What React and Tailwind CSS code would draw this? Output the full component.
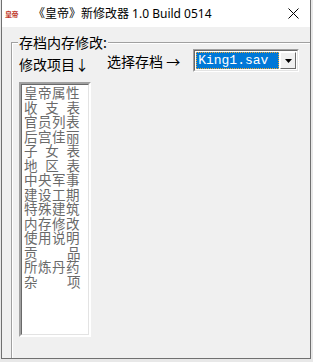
import React from "react";

const items = [
  "皇帝属性",
  "收\u2002支\u2002表",
  "官员列表",
  "后宫佳丽",
  "子\u2002女\u2002表",
  "地\u2002区\u2002表",
  "中央军事",
  "建设工期",
  "特殊建筑",
  "内存修改",
  "使用说明",
  "贡\u2002\u2002\u2002\u2002品",
  "所炼丹药",
  "杂\u2002\u2002\u2002\u2002项",
];

const cjk = { fontFamily: '"Noto Sans CJK SC", sans-serif' };

export default function App() {
  return (
    <div className="w-[313px] h-[362px] bg-[#e8e8e8] pl-[1px] overflow-hidden">
      {/* WINDOW */}
      <div className="w-[310px] h-[359px] flex flex-col border-l border-r border-b border-[#707070] bg-[#f0f0f0]">
        {/* TITLE BAR */}
        <div className="h-[27px] bg-white flex items-center shrink-0">
          <span
            className="ml-[3px] w-[16px] text-[7px] leading-[8px] font-bold text-[#c0392b] tracking-[-0.5px]"
            style={cjk}
          >
            皇帝
          </span>
          <span
            className="ml-[12px] text-[12px] text-black"
            style={{ fontFamily: '"Noto Sans", "Noto Sans CJK SC", sans-serif' }}
          >
            《皇帝》新修改器 1.0 Build 0514
          </span>
          <div className="ml-auto mr-[11px] flex items-center">
            <svg width="11" height="11" viewBox="0 0 11 11">
              <path d="M0.5 0.5 L10.5 10.5 M10.5 0.5 L0.5 10.5" stroke="#000" strokeWidth="1" />
            </svg>
          </div>
        </div>

        {/* CLIENT AREA */}
        <div className="flex-1 pl-[9px] pt-[15px]">
          {/* GROUP BOX */}
          <div className="relative h-full border-t border-l border-[#a0a0a0] shadow-[inset_1px_1px_0_#ffffff]">
            <span
              className="absolute -top-[11px] left-[6px] px-[1px] bg-[#f0f0f0] text-[14px] leading-[20px] text-black"
              style={cjk}
            >
              存档内存修改:
            </span>

            <div className="flex pt-[1px]">
              {/* LEFT: items list */}
              <div className="pl-[7px] flex flex-col">
                <div className="pt-[10px] text-[14px] leading-[20px] text-black" style={cjk}>
                  修改项目↓
                </div>
                <div className="mt-[8px] w-[72px] h-[255px] border-2 border-t-[#a0a0a0] border-l-[#a0a0a0] border-b-white border-r-white">
                  <div className="w-full h-full border border-t-[#696969] border-l-[#696969] border-b-[#e3e3e3] border-r-[#e3e3e3] bg-white pl-[2px]">
                    {items.map((t) => (
                      <div
                        key={t}
                        className="text-[13.5px] leading-[14.5px] tracking-[0.5px] text-[#6a6a6a] whitespace-pre"
                        style={cjk}
                      >
                        {t}
                      </div>
                    ))}
                  </div>
                </div>
              </div>

              {/* RIGHT: save select */}
              <div className="ml-[16px] pt-[5px] flex items-center h-fit">
                <span className="text-[14px] leading-[20px] text-black" style={cjk}>
                  选择存档 →
                </span>
                <div className="ml-[13px] w-[106px] h-[23px] border border-t-[#a0a0a0] border-l-[#a0a0a0] border-b-white border-r-white">
                  <div className="w-full h-full border border-t-[#696969] border-l-[#696969] border-b-[#e3e3e3] border-r-[#e3e3e3] bg-white p-[1px] flex">
                    <div className="w-[84px] h-full bg-[#0078d7] border border-dotted border-[#f0a830] flex items-center">
                      <span
                        className="pl-[1px] text-[13px] leading-[15px] text-white"
                        style={{ fontFamily: '"Liberation Mono", monospace' }}
                      >
                        King1.sav
                      </span>
                    </div>
                    <div className="ml-[1px] w-[16px] h-full bg-[#f0f0f0] border border-t-white border-l-white border-b-[#696969] border-r-[#696969] flex items-center justify-center">
                      <svg width="7" height="4" viewBox="0 0 7 4">
                        <path d="M0 0 H7 L3.5 4 Z" fill="#000" />
                      </svg>
                    </div>
                  </div>
                </div>
              </div>
            </div>
          </div>
        </div>
      </div>
    </div>
  );
}
